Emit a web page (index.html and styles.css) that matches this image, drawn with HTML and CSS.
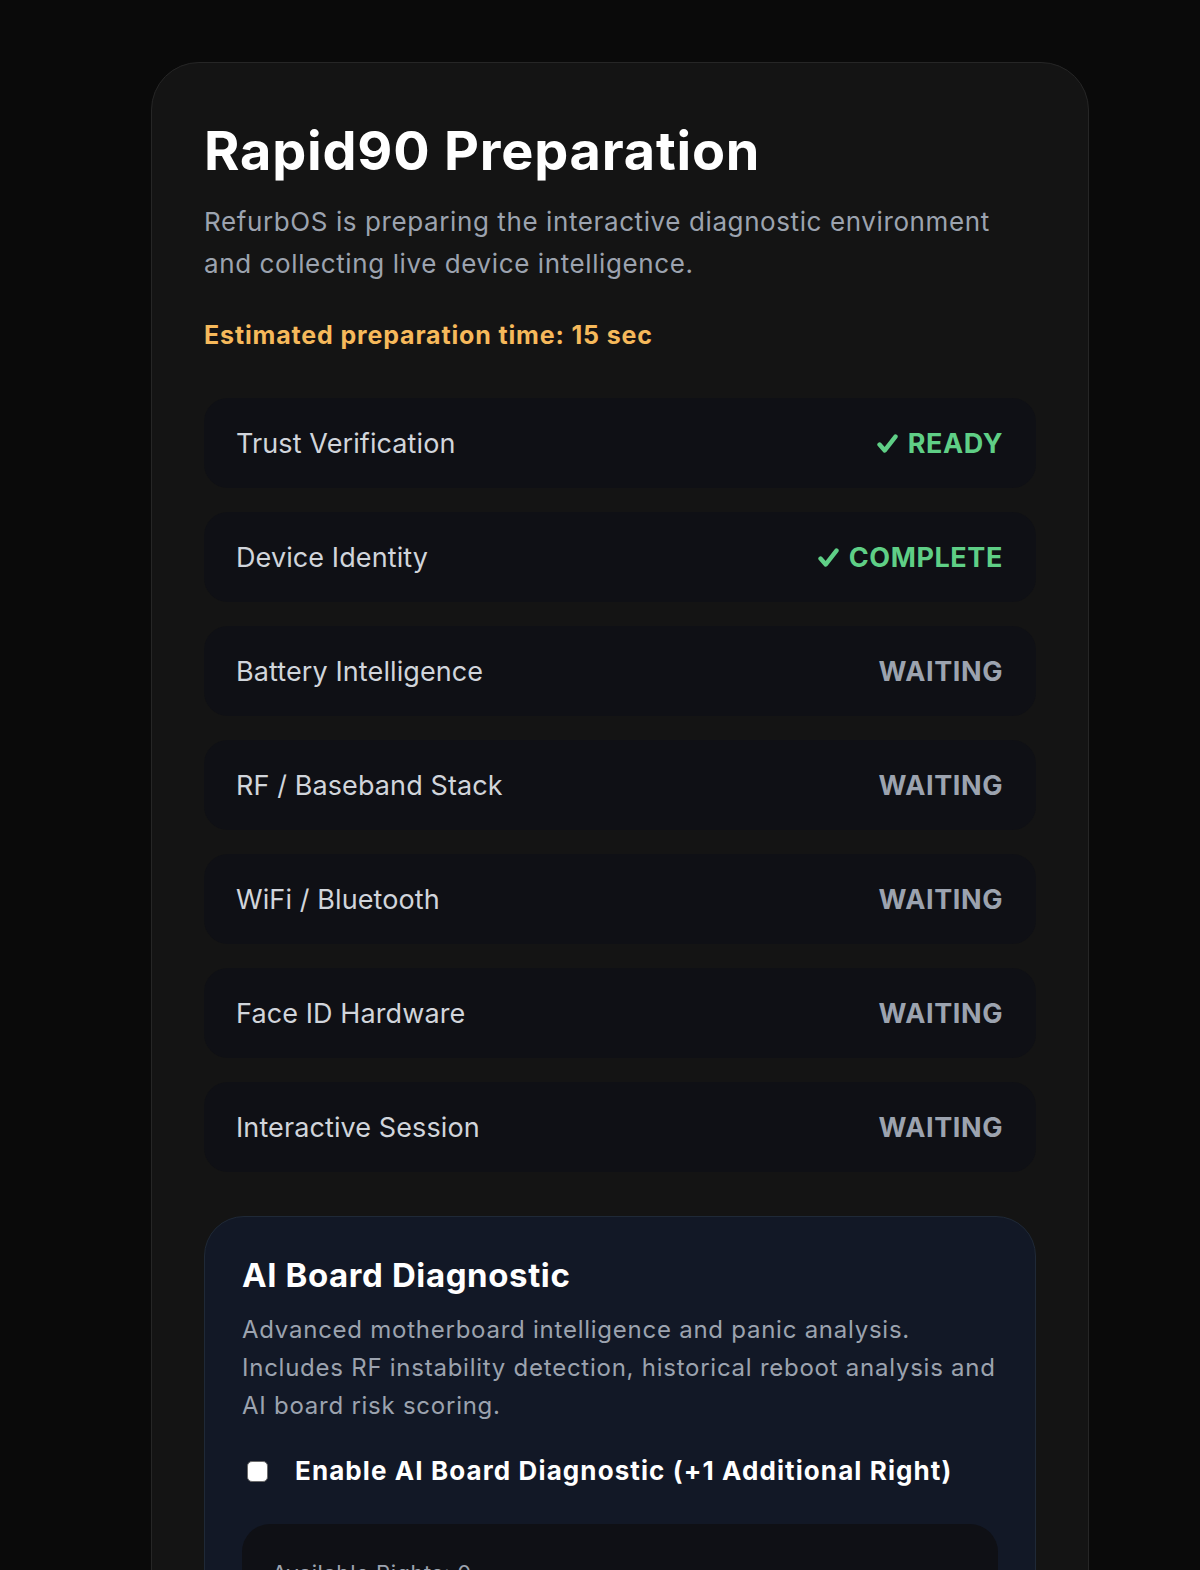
FILE: index.html
```html
<!DOCTYPE html>
<html lang="en">
<head>
<meta charset="utf-8">
<title>Rapid90 Preparation</title>
<link rel="stylesheet" href="styles.css">
</head>
<body>
<main class="card">
  <h1 class="title">Rapid90 Preparation</h1>
  <p class="subtitle">RefurbOS is preparing the interactive diagnostic environment and collecting live device intelligence.</p>
  <p class="eta">Estimated preparation time: 15 sec</p>

  <ul class="steps">
    <li class="step"><span class="step-name">Trust Verification</span><span class="status ok"><svg class="tick" viewBox="0 0 20 18" aria-hidden="true"><path d="M2.4 10 L7.4 15.6 L17.6 2.4"/></svg>READY</span></li>
    <li class="step"><span class="step-name">Device Identity</span><span class="status ok"><svg class="tick" viewBox="0 0 20 18" aria-hidden="true"><path d="M2.4 10 L7.4 15.6 L17.6 2.4"/></svg>COMPLETE</span></li>
    <li class="step"><span class="step-name">Battery Intelligence</span><span class="status wait">WAITING</span></li>
    <li class="step"><span class="step-name">RF / Baseband Stack</span><span class="status wait">WAITING</span></li>
    <li class="step"><span class="step-name">WiFi / Bluetooth</span><span class="status wait">WAITING</span></li>
    <li class="step"><span class="step-name">Face ID Hardware</span><span class="status wait">WAITING</span></li>
    <li class="step"><span class="step-name">Interactive Session</span><span class="status wait">WAITING</span></li>
  </ul>

  <section class="addon">
    <h2 class="addon-title">AI Board Diagnostic</h2>
    <p class="addon-desc">Advanced motherboard intelligence and panic analysis.<br>Includes RF instability detection, historical reboot analysis and<br>AI board risk scoring.</p>
    <label class="addon-check"><input type="checkbox" class="cb"><span>Enable AI Board Diagnostic (+1 Additional Right)</span></label>
    <div class="rights">Available Rights: 0</div>
  </section>
</main>
</body>
</html>
```

FILE: styles.css
```css
* { box-sizing: border-box; }
html, body { margin: 0; padding: 0; }
body {
  background: #0a0a0a;
  font-family: Inter, "Noto Sans", "Liberation Sans", sans-serif;
  color: #fff;
  overflow: hidden;
  height: 1570px;
}
.card {
  width: 938px;
  margin: 62px 0 0 151px;
  background: #141414;
  border: 1px solid #262626;
  border-radius: 48px;
  padding: 52px 52px 60px 52px;
}
.title {
  margin: 0;
  font-size: 54px;
  font-weight: 700;
  line-height: 72px;
  letter-spacing: 0.8px;
}
.subtitle {
  margin: 14px 0 0;
  font-size: 26px;
  line-height: 42px;
  letter-spacing: 0.6px;
  color: #9ca3af;
}
.eta {
  margin: 32px 0 0;
  font-size: 25px;
  font-weight: 700;
  line-height: 36px;
  letter-spacing: 0.85px;
  color: #f6b95b;
}
.steps {
  list-style: none;
  margin: 45px 0 0;
  padding: 0;
  display: flex;
  flex-direction: column;
  gap: 24px;
}
.step {
  display: flex;
  justify-content: space-between;
  align-items: center;
  height: 90px;
  padding: 0 33px 0 32px;
  background: #0f1015;
  border-radius: 24px;
}
.step-name {
  font-size: 27px;
  letter-spacing: 0.1px;
  color: #d1d5db;
}
.status {
  display: flex;
  align-items: center;
  gap: 10px;
  font-size: 27px;
  font-weight: 700;
  letter-spacing: 0.6px;
}
.status.ok { color: #5fcf86; }
.status.wait { color: #9ca3af; }
.tick {
  width: 21px;
  height: 19px;
  fill: none;
  stroke: currentColor;
  stroke-width: 4.2;
  stroke-linecap: round;
  stroke-linejoin: round;
}
.addon {
  margin-top: 44px;
  background: #121826;
  border: 1px solid #1f2937;
  border-radius: 40px;
  padding: 36px 30px 40px 37px;
}
.addon-title {
  margin: 0;
  font-size: 33px;
  font-weight: 700;
  line-height: 44px;
  letter-spacing: 0.6px;
}
.addon-desc {
  margin: 14px 0 0;
  font-size: 24px;
  line-height: 38px;
  letter-spacing: 0.75px;
  color: #9ca3af;
}
.addon-check {
  display: flex;
  align-items: center;
  gap: 27px;
  margin-top: 26px;
  font-size: 26px;
  font-weight: 700;
  line-height: 40px;
  letter-spacing: 1.1px;
}
.cb {
  appearance: none;
  -webkit-appearance: none;
  margin: 0 0 0 5px;
  width: 21px;
  height: 21px;
  background: #fff;
  border: 1.5px solid #6b6b6b;
  border-radius: 5px;
}
.rights {
  margin-top: 33px;
  margin-right: 7px;
  background: #0f1015;
  border-radius: 28px;
  padding: 32px 30px;
  font-size: 22px;
  color: #9ca3af;
  line-height: 34px;
  letter-spacing: 0.5px;
}
```
